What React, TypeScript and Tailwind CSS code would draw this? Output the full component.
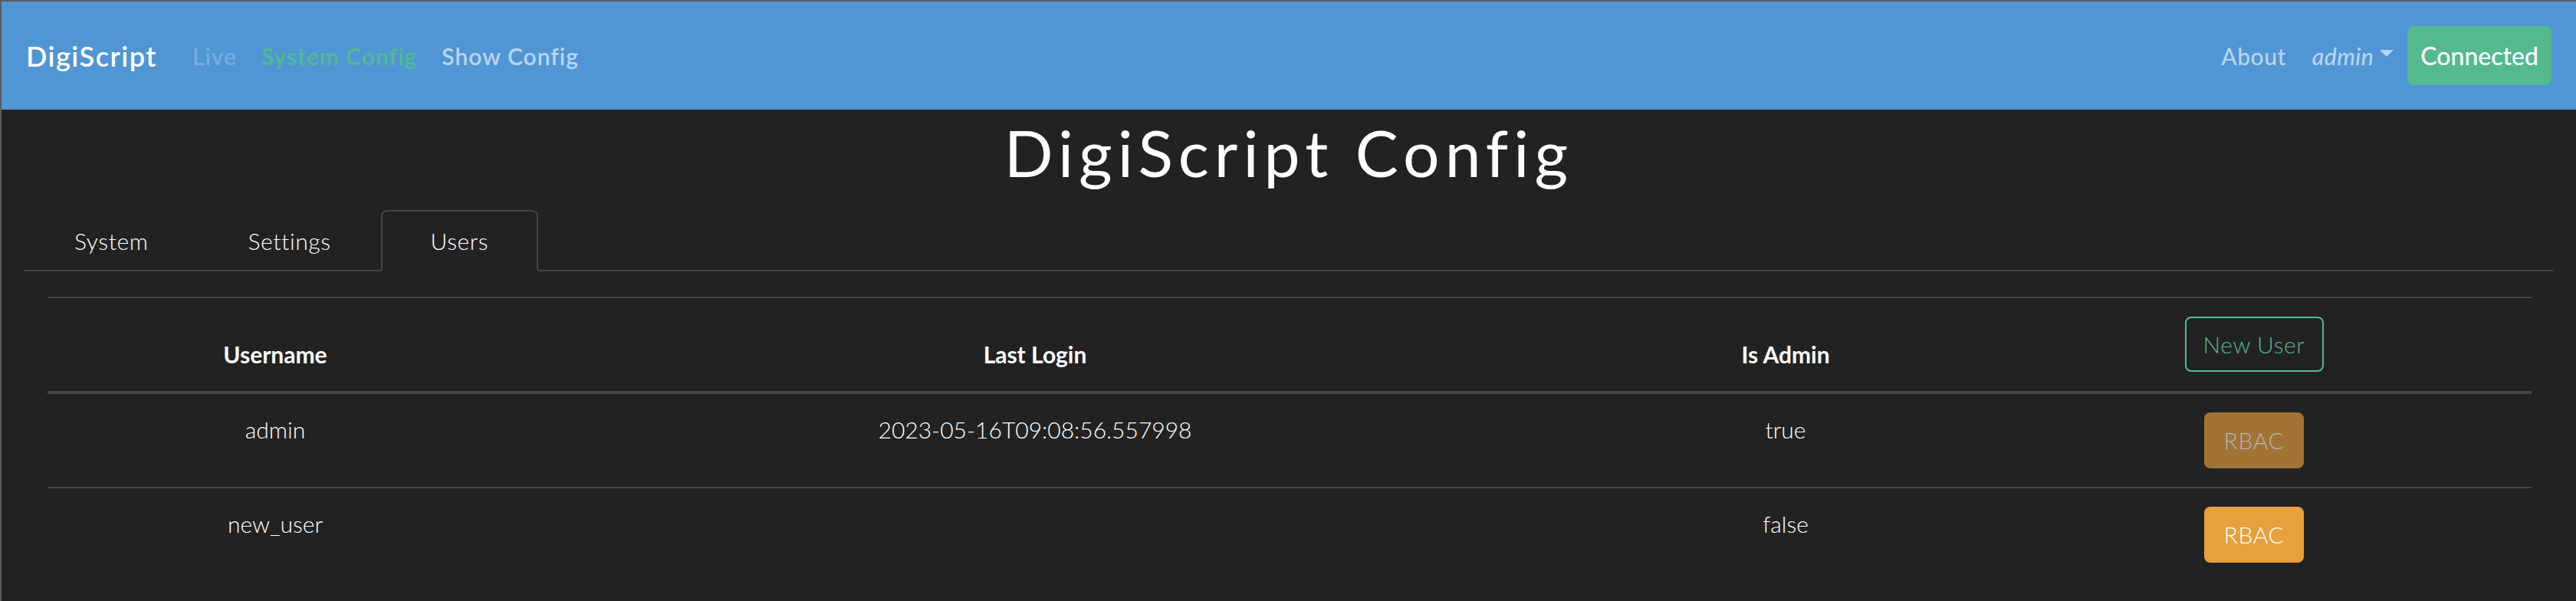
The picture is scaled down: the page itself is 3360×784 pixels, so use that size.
import React from "react";

type User = { username: string; lastLogin: string; isAdmin: boolean };

const users: User[] = [
  { username: "admin", lastLogin: "2023-05-16T09:08:56.557998", isAdmin: true },
  { username: "new_user", lastLogin: "", isAdmin: false },
];

function Navbar() {
  return (
    <nav className="h-[141px] bg-[#5096d5] flex items-center pl-[32px] pr-[32px]">
      <span className="text-[36px] font-semibold tracking-[1.5px] text-white leading-none">DigiScript</span>
      <ul className="ml-[46px] flex items-center gap-[32px] text-[30px] font-semibold tracking-[1px] leading-none">
        <li className="text-[#7aaade]">Live</li>
        <li className="text-[#4fbb8d]">System Config</li>
        <li className="text-[#bad5ee]">Show Config</li>
      </ul>
      <div className="ml-auto flex items-center text-[30px] font-medium leading-none text-[#bad5ee]">
        <span className="tracking-[0.5px]">About</span>
        <span className="ml-[34px] flex items-center italic tracking-[0.5px]">
          admin
          <span className="ml-[8px] mb-[6px] w-0 h-0 border-x-[9px] border-t-[9px] border-x-transparent border-t-[#bad5ee]" />
        </span>
        <button
          type="button"
          className="ml-[18px] h-[77px] px-[17px] rounded-[8px] bg-[#55b990] text-white text-[32px] font-medium"
        >
          Connected
        </button>
      </div>
    </nav>
  );
}

function Tabs() {
  const tabs = ["System", "Settings", "Users"];
  return (
    <div className="mx-[30px] flex border-b-2 border-[#464646]">
      {tabs.map((t) => {
        const active = t === "Users";
        return (
          <div
            key={t}
            className={
              active
                ? "-mb-[2px] h-[80px] px-[63px] flex items-center border-2 border-[#464646] border-b-[#222222] rounded-t-[8px] bg-[#222222] text-[30px] font-light tracking-[0.6px] leading-[45px]"
                : "-mb-[2px] h-[80px] px-[63px] flex items-center border-2 border-transparent text-[30px] font-light tracking-[0.6px] leading-[45px]"
            }
          >
            {t}
          </div>
        );
      })}
    </div>
  );
}

function UsersTable() {
  return (
    <table className="w-full table-fixed border-t-2 border-[#464646] text-[30px] leading-[45px]">
      <colgroup>
        <col className="w-[594px]" />
        <col className="w-[1388px]" />
        <col className="w-[570px]" />
        <col className="w-[688px]" />
      </colgroup>
      <thead>
        <tr className="border-b-4 border-[#464646]">
          <th className="pt-[24px] pb-[25px] align-bottom font-bold">Username</th>
          <th className="pt-[24px] pb-[25px] align-bottom font-bold">Last Login</th>
          <th className="pt-[24px] pb-[25px] align-bottom font-bold">Is Admin</th>
          <th className="pt-[24px] pb-[25px] pr-[36px] align-bottom">
            <button
              type="button"
              className="w-[181px] h-[72px] rounded-[8px] border-2 border-[#52b98e] text-[#52b98e] font-light tracking-[0.6px]"
            >
              New User
            </button>
          </th>
        </tr>
      </thead>
      <tbody>
        {users.map((u, i) => (
          <tr key={u.username} className={i > 0 ? "border-t-2 border-[#464646]" : ""}>
            <td className="py-[24px] align-top text-center font-light">{u.username}</td>
            <td className="py-[24px] align-top text-center font-light">{u.lastLogin}</td>
            <td className="py-[24px] align-top text-center font-light">{u.isAdmin ? "true" : "false"}</td>
            <td className="py-[24px] pr-[36px] align-top text-center">
              <button
                type="button"
                disabled={u.isAdmin}
                className={
                  u.isAdmin
                    ? "w-[130px] h-[73px] rounded-[8px] bg-[#e6a03e] text-white font-light tracking-[0.6px] opacity-65"
                    : "w-[130px] h-[73px] rounded-[8px] bg-[#e6a03e] text-white font-light tracking-[0.6px]"
                }
              >
                RBAC
              </button>
            </td>
          </tr>
        ))}
      </tbody>
    </table>
  );
}

export default function App() {
  return (
    <div className="min-h-screen bg-[#222222] border-t-2 border-l-2 border-[#5a5a5a] text-white font-['Lato','Open_Sans',sans-serif]">
      <Navbar />
      <h1 className="mt-[14px] text-center text-[84px] font-normal tracking-[7px] leading-none">DigiScript Config</h1>
      <div className="mt-[33px]">
        <Tabs />
        <div className="px-[60px] pt-[33px]">
          <UsersTable />
        </div>
      </div>
    </div>
  );
}
